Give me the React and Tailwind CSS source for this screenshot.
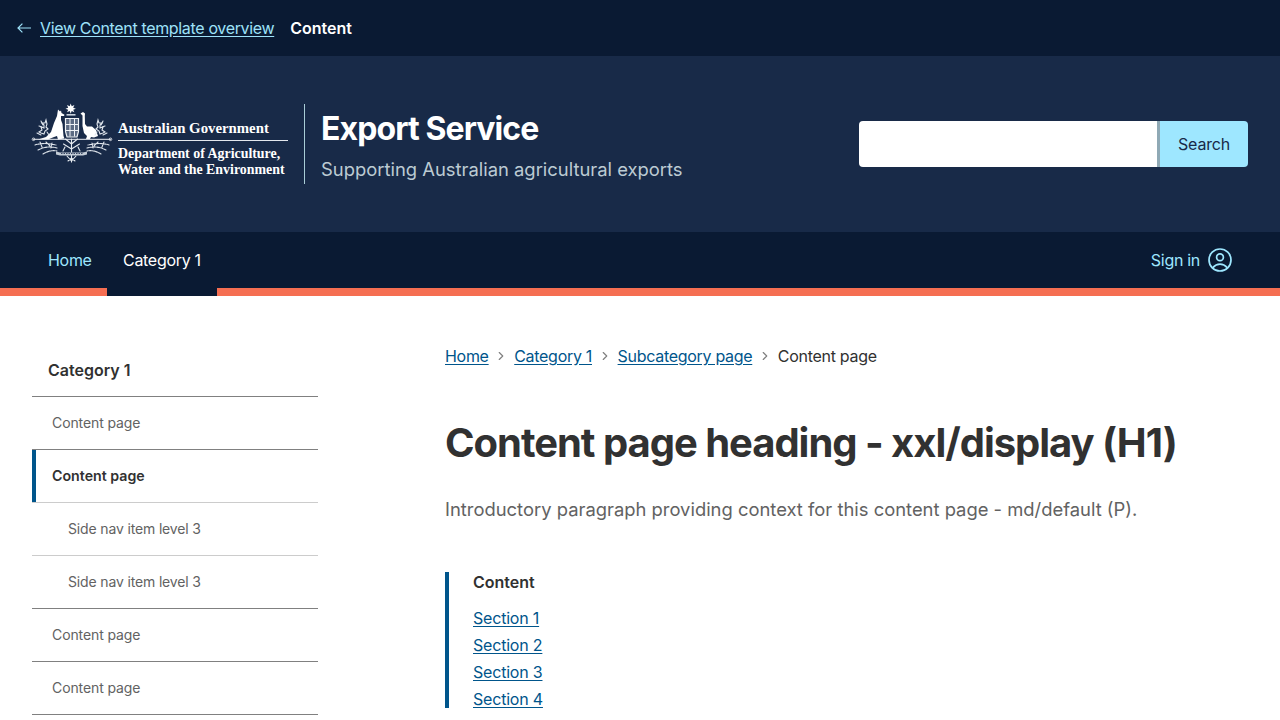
import { ChevronRight } from "lucide-react";

function Crest() {
    return (
        <svg width="88" height="66" viewBox="0 0 88 66" className="mb-[22px] -ml-1 shrink-0" fill="none">
            {/* star and wreath */}
            <path d="M42.700 3.500l1 2.700 2.700-1.100-1.200 2.600 2.700 1-2.700 1 1.200 2.500-2.700-1.100-1 2.700-1-2.700-2.700 1.100 1.200-2.500-2.700-1 2.700-1-1.200-2.600 2.700 1.100z" fill="#fff" />
            <rect x="38.500" y="14" width="9" height="1.600" fill="#c9d2dc" />
            {/* kangaroo */}
            <path d="M30 9.500L32 11.500 33 10.500 33.500 13 36.500 14.800 36 16H33V20L34.500 24 35 30 35.500 36 36.500 38.500 30 39.500 29 36 26 37 20 39.500H10L18 37 23 32 26 23 29 16z" fill="#fff" />
            {/* emu */}
            <path d="M52.500 13.500L55 12 57 13.500 56.800 16 57 24 59 26.500H64L68 30 70 36 66 37.500 63 37 62 39H58L59 36 56 33 54.500 26V15.500z" fill="#fff" />
            {/* shield */}
            <path d="M37.500 18.500h13v13l-1.500 5.500h-10l-1.500-5.500z" fill="#5c6b83" stroke="#f0f3f6" strokeWidth="1.200" />
            <path d="M37.500 24.500h13M37.500 30.500h13M42 18.500v18M46.500 18.500v18" stroke="#f0f3f6" strokeWidth="1" />
            {/* ground line */}
            <path d="M5 39.300h78" stroke="#eef1f5" strokeWidth="1" />
            <circle cx="5.500" cy="39.300" r="1.300" stroke="#eef1f5" strokeWidth="0.800" />
            <circle cx="82.500" cy="39.300" r="1.300" stroke="#eef1f5" strokeWidth="0.800" />
            {/* foliage upper */}
            <g stroke="#dfe5ec" strokeWidth="1.100" strokeLinecap="round">
                <path d="M11 32l3-2-1-3 3 1 0-3-2-2 3 0 1-3 1 4-1 3 2 2-3 2-1 3-3-1z" />
                <path d="M11 26l3 1M13 21l2 4M19 32l2 3M9 33l4 2" />
                <path d="M77 32l-3-2 1-3-3 1 0-3 2-2-3 0-1-3-1 4 1 3-2 2 3 2 1 3 3-1z" />
                <path d="M77 26l-3 1M75 21l-2 4M69 32l-2 3M79 33l-4 2" />
            </g>
            {/* foliage lower */}
            <g stroke="#dfe5ec" strokeWidth="1.100" strokeLinecap="round" strokeDasharray="2.500 1">
                <path d="M7 45c6-2 13-2 21 0M10 50c6-3 12-4 19-2M15 54c5-3 9-4 14-3M18 42l4 4M12 42l2 5M24 43l-1 5" />
                <path d="M81 45c-6-2-13-2-21 0M78 50c-6-3-12-4-19-2M73 54c-5-3-9-4-14-3M70 42l-4 4M76 42l-2 5M64 43l1 5" />
            </g>
            {/* centre tree */}
            <g stroke="#e6ebf0" strokeWidth="1.100" strokeLinecap="round">
                <path d="M43.500 39v13M43.500 44l-6-5M43.500 44l6-5M43.500 49l-8-5M43.500 49l8-5M37 47l-2 4M50 47l2 4" />
                <path d="M39 56l4.500 5 4.500-5M40 61l3.500-3 3.500 3M43.500 55v7" />
            </g>
            {/* banner */}
            <path d="M28 51.500l4 1h23l4-1v3l-4 1H32l-4-1z" fill="#c3ccd6" />
            <path d="M33 53.500h22" stroke="#3b4a66" strokeWidth="1" strokeDasharray="1.500 1" />
        </svg>
    );
}

function UserIcon() {
    return (
        <svg width="24" height="24" viewBox="0 0 24 24" fill="none" stroke="currentColor" strokeWidth="1.700" className="ml-2">
            <circle cx="12" cy="12" r="11" />
            <circle cx="12" cy="9.300" r="3.400" />
            <path d="M4.500 19.800C7 17.200 9 16.200 12 16.200s5 1 7.500 3.600" />
        </svg>
    );
}

function SideItem({ children, className }) {
    return (
        <a href="#" className={`flex h-[53px] items-center text-[#626262] ${className}`}>
            {children}
        </a>
    );
}

export default function App() {
    const crumbs = ["Home", "Category 1", "Subcategory page"];
    const sections = ["Section 1", "Section 2", "Section 3", "Section 4"];

    return (
        <div className="h-[720px] overflow-hidden bg-white font-['Inter',sans-serif] text-[#313131]">
            <div className="flex h-14 items-center bg-[#0a1a33] pl-[17px] text-base">
                <svg width="14" height="10" viewBox="0 0 14 10" fill="none" stroke="#9ee2f9" strokeWidth="1.200">
                    <path d="M14 5H1M5.400.6 1 5l4.400 4.400" />
                </svg>
                <a href="#" className="ml-[9px] tracking-[-0.34px] text-[#9ee2f9] underline underline-offset-2">View Content template overview</a>
                <span className="ml-4 font-semibold text-white">Content</span>
            </div>

            <header className="flex h-[176px] items-center justify-between bg-[#182a48] pl-8 pr-8">
                <div className="flex items-center">
                    <Crest />
                    <div className="mt-[10px] ml-[2px] flex w-[170px] flex-col font-['Liberation_Serif',serif] text-[13.900px] font-bold text-white">
                        <span className="border-b border-[#e4e8ee] pb-[3px] text-[14.800px] leading-[17px] whitespace-nowrap">Australian Government</span>
                        <span className="mt-[5px] leading-4 whitespace-nowrap">Department of Agriculture,</span>
                        <span className="leading-4 whitespace-nowrap">Water and the Environment</span>
                    </div>
                    <div className="ml-4 flex h-20 items-center border-l border-[#a9cdd6] pl-4">
                        <div className="pt-[2px]">
                            <h2 className="text-[32px] leading-[44px] font-bold tracking-[-0.9px] text-white">Export Service</h2>
                            <p className="mt-1 text-[18.400px] leading-[28px] text-[#bccbd3]">Supporting Australian agricultural exports</p>
                        </div>
                    </div>
                </div>
                <div className="flex h-[46px] w-[389px]">
                    <div className="flex-1 rounded-l border-r-[3px] border-[#8fa9b5] bg-white" />
                    <button className="w-[88px] rounded-r bg-[#9ee7ff] text-base tracking-[-0.2px] text-[#182a48]">Search</button>
                </div>
            </header>

            <nav className="flex h-16 justify-between border-b-8 border-[#f56e52] bg-[#0a1a33] pl-8 pr-12 text-base tracking-[-0.3px]">
                <div className="flex">
                    <a href="#" className="flex h-14 w-[75px] items-center pl-4 text-[#9ee7ff]">Home</a>
                    <a href="#" className="-mb-2 flex h-16 w-[110px] items-start bg-[#0a1a33] pl-4 pt-4 leading-6 text-white">Category 1</a>
                </div>
                <a href="#" className="flex h-14 items-center text-[#9ee7ff]">
                    Sign in
                    <UserIcon />
                </a>
            </nav>

            <div className="flex pl-8">
                <aside className="mt-[48px] w-[286px] shrink-0">
                    <div className="flex h-[53px] items-center border-b border-[#808080] pb-[1px] pl-4 text-base font-semibold">Category 1</div>
                    <SideItem className="border-b border-[#808080] pl-5 text-sm tracking-[-0.1px]">Content page</SideItem>
                    <div className="h-[53px] border-b border-[#cccccc]">
                        <a href="#" className="flex h-full items-center border-l-4 border-[#00558b] pl-4 text-[14.200px] font-semibold">Content page</a>
                    </div>
                    <SideItem className="border-b border-[#cccccc] pl-9 text-sm tracking-[-0.15px]">Side nav item level 3</SideItem>
                    <SideItem className="border-b border-[#808080] pl-9 text-sm tracking-[-0.15px]">Side nav item level 3</SideItem>
                    <SideItem className="border-b border-[#808080] pl-5 text-sm tracking-[-0.1px]">Content page</SideItem>
                    <SideItem className="border-b border-[#808080] pl-5 text-sm tracking-[-0.1px]">Content page</SideItem>
                </aside>

                <main className="ml-[127px] flex-1 pt-12">
                    <div className="flex h-6 items-center text-base leading-6 tracking-[-0.3px]">
                        {crumbs.map(c => (
                            <span key={c} className="flex items-center">
                                <a href="#" className="text-[#00558b] underline underline-offset-2">{c}</a>
                                <ChevronRight size={14} className="mx-[5.800px] text-[#808080]" />
                            </span>
                        ))}
                        <span>Content page</span>
                    </div>
                    <h1 className="mt-[49px] text-[40px] leading-[52px] font-bold tracking-[-1.03px]">Content page heading - xxl/display (H1)</h1>
                    <p className="mt-[26px] text-[18.400px] leading-[28px] text-[#626262]">Introductory paragraph providing context for this content page - md/default (P).</p>
                    <div className="mt-[49px] h-[136px] border-l-4 border-[#00558b] pl-6">
                        <p className="text-base leading-5 font-semibold">Content</p>
                        <ul className="mt-[13px]">
                            {sections.map(s => (
                                <li key={s} className="h-[27px] leading-[27px]">
                                    <a href="#" className="text-base tracking-[-0.2px] text-[#00558b] underline underline-offset-2">{s}</a>
                                </li>
                            ))}
                        </ul>
                    </div>
                </main>
            </div>
        </div>
    );
}
